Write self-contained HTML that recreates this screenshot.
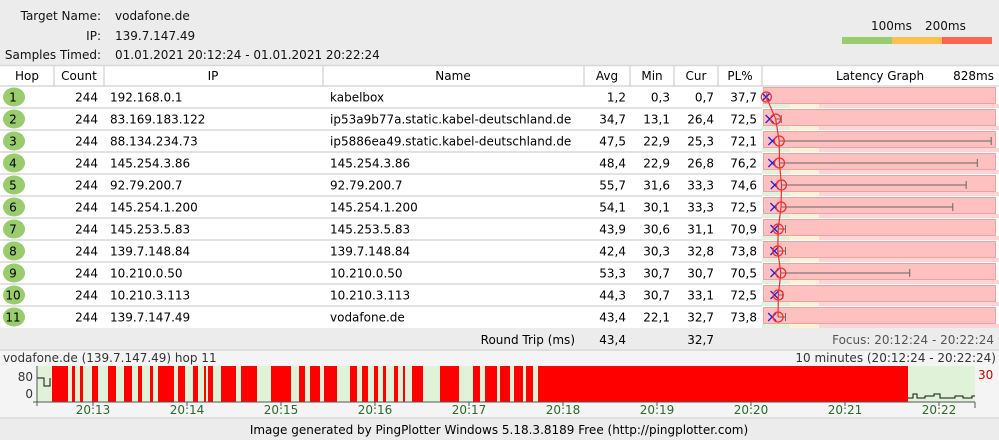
<!DOCTYPE html>
<html><head><meta charset="utf-8"><style>
*{margin:0;padding:0;box-sizing:border-box}
body{width:999px;height:440px;background:#ececec;font-family:"DejaVu Sans","Liberation Sans",sans-serif;font-size:12px;color:#111;position:relative;overflow:hidden}
.a{position:absolute;white-space:nowrap}
.r{text-align:right}
</style></head><body>
<div class="a r" style="left:0;width:101px;top:9px">Target Name:</div>
<div class="a" style="left:115px;top:9px">vodafone.de</div>
<div class="a r" style="left:0;width:101px;top:29px">IP:</div>
<div class="a" style="left:115px;top:29px">139.7.147.49</div>
<div class="a r" style="left:0;width:101px;top:48px">Samples Timed:</div>
<div class="a" style="left:115px;top:48px">01.01.2021 20:12:24 - 01.01.2021 20:22:24</div>
<div class="a" style="left:871px;top:19px">100ms</div>
<div class="a" style="left:925px;top:19px">200ms</div>
<div class="a" style="left:842px;top:37px;width:50px;height:7px;background:#98cc6c"></div>
<div class="a" style="left:892px;top:37px;width:50px;height:7px;background:#ffc04c"></div>
<div class="a" style="left:942px;top:37px;width:50px;height:7px;background:#ff6450"></div>
<div id="rows"></div>
<script>
var data=[
["1","192.168.0.1","kabelbox","1,2","0,3","0,7","37,7",1.2,0.3,3],
["2","83.169.183.122","ip53a9b77a.static.kabel-deutschland.de","34,7","13,1","26,4","72,5",34.7,13.1,55],
["3","88.134.234.73","ip5886ea49.static.kabel-deutschland.de","47,5","22,9","25,3","72,1",47.5,22.9,810],
["4","145.254.3.86","145.254.3.86","48,4","22,9","26,8","76,2",48.4,22.9,760],
["5","92.79.200.7","92.79.200.7","55,7","31,6","33,3","74,6",55.7,31.6,720],
["6","145.254.1.200","145.254.1.200","54,1","30,1","33,3","72,5",54.1,30.1,672],
["7","145.253.5.83","145.253.5.83","43,9","30,6","31,1","70,9",43.9,30.6,70],
["8","139.7.148.84","139.7.148.84","42,4","30,3","32,8","73,8",42.4,30.3,70],
["9","10.210.0.50","10.210.0.50","53,3","30,7","30,7","70,5",53.3,30.7,517],
["10","10.210.3.113","10.210.3.113","44,3","30,7","33,1","72,5",44.3,30.7,60],
["11","139.7.147.49","vodafone.de","43,4","22,1","32,7","73,8",43.4,22.1,70]];
var s='<svg class="a" style="left:0;top:0" width="999" height="440" xmlns="http://www.w3.org/2000/svg" font-family="DejaVu Sans, Liberation Sans, sans-serif" font-size="12">';
s+='<rect x="0" y="65" width="999" height="263" fill="#fff"/><g stroke="#d8d8d8" stroke-width="1.5"><line x1="0" y1="65.5" x2="999" y2="65.5"/><line x1="0" y1="86" x2="999" y2="86"/>';
for(var k=1;k<11;k++)s+='<line x1="0" y1="'+(86+k*22)+'" x2="762" y2="'+(86+k*22)+'"/>';
[54,104,323,584,630,674,718,762].forEach(function(x){s+='<line x1="'+x+'" y1="66" x2="'+x+'" y2="86"/>';});
s+='</g><g text-anchor="middle"><text x="27" y="80">Hop</text><text x="79" y="80">Count</text><text x="213" y="80">IP</text><text x="453" y="80">Name</text><text x="607" y="80">Avg</text><text x="652" y="80">Min</text><text x="696" y="80">Cur</text><text x="740" y="80">PL%</text></g><text x="836" y="80">Latency Graph</text><text x="994" y="80" text-anchor="end">828ms</text>';
function X(v){return 766+v*0.278;}
var pts=[];
for(var i=0;i<11;i++){var d=data[i],t=86+i*22,cy=t+11,ty=cy+4.5;
s+='<rect x="762" y="'+(t+18)+'" width="28" height="4" fill="#e2f2da"/><rect x="790" y="'+(t+18)+'" width="29" height="4" fill="#fff2d6"/><rect x="819" y="'+(t+18)+'" width="180" height="4" fill="#ffd4d4"/>';
s+='<rect x="763.5" y="'+(t+1.5)+'" width="232" height="16" fill="#ffc0c0" stroke="#e8a4a4"/>';
s+='<ellipse cx="14" cy="'+cy+'" rx="11" ry="9.5" fill="#98cc6c"/><text x="13" y="'+ty+'" text-anchor="middle">'+d[0]+'</text>';
s+='<text x="98" y="'+ty+'" text-anchor="end">244</text><text x="110" y="'+ty+'">'+d[1]+'</text><text x="330" y="'+ty+'">'+d[2]+'</text>';
s+='<g text-anchor="end"><text x="626" y="'+ty+'">'+d[3]+'</text><text x="670" y="'+ty+'">'+d[4]+'</text><text x="714" y="'+ty+'">'+d[5]+'</text><text x="757" y="'+ty+'">'+d[6]+'</text></g>';
var ax=X(d[7]),mn=X(d[8]),mx=X(d[9]);pts.push(ax+','+cy);
s+='<line x1="'+ax+'" y1="'+cy+'" x2="'+mx+'" y2="'+cy+'" stroke="#666"/><line x1="'+mx+'" y1="'+(cy-4)+'" x2="'+mx+'" y2="'+(cy+4)+'" stroke="#666"/>';
s+='<path d="M'+(mn-4)+' '+(cy-4)+'L'+(mn+4)+' '+(cy+4)+'M'+(mn-4)+' '+(cy+4)+'L'+(mn+4)+' '+(cy-4)+'" stroke="#2020e0" stroke-width="1.3"/>';
s+='<circle cx="'+ax+'" cy="'+cy+'" r="5" fill="none" stroke="#f03030" stroke-width="1.3"/>';}
s+='<polyline points="'+pts.join(' ')+'" fill="none" stroke="#f03030" stroke-width="1.2"/>';
s+='<line x1="0" y1="350" x2="999" y2="350" stroke="#d0d0d0"/><text x="575" y="344" text-anchor="end">Round Trip (ms)</text><text x="626" y="344" text-anchor="end">43,4</text><text x="714" y="344" text-anchor="end">32,7</text><text x="994" y="344" text-anchor="end" fill="#555">Focus: 20:12:24 - 20:22:24</text>';
s+='<rect x="0" y="351" width="999" height="67" fill="#f4f4f4"/><line x1="0" y1="418" x2="999" y2="418" stroke="#d0d0d0"/>';
s+='<text x="3" y="362" fill="#333">vodafone.de (139.7.147.49) hop 11</text><text x="996" y="362" text-anchor="end" fill="#333">10 minutes (20:12:24 - 20:22:24)</text>';
s+='<rect x="37" y="366" width="938" height="36" fill="#e0f2d8"/>';
var red=[[52,68],[72,75],[80,83],[92,98],[108,116],[124,132],[138,142],[150,153],[158,174],[178,185],[193,198],[204,206],[208,213],[221,236],[241,257],[271,291],[299,305],[310,320],[324,337],[350,357],[362,368],[374,378],[383,386],[394,398],[403,405],[412,423],[440,459],[473,480],[485,497],[500,510],[514,523],[526,533],[538,908]];
red.forEach(function(r){s+='<rect x="'+r[0]+'" y="366" width="'+(r[1]-r[0])+'" height="36" fill="#ff0000"/>';});
s+='<path d="M37 378H44V386H50V378M908 398H913V394H917V398H925V396H934V394H940V398H955V396H963V398H972V396H975" fill="none" stroke="#111"/>';
s+='<line x1="37" y1="366" x2="37" y2="406" stroke="#555"/><line x1="33" y1="402" x2="975" y2="402" stroke="#555"/><line x1="975" y1="402" x2="975" y2="408" stroke="#555"/>';
s+='<text x="33" y="381" text-anchor="end" fill="#333">80</text><text x="33" y="398" text-anchor="end" fill="#333">0</text><text x="978" y="379" fill="#c00">30</text>';
for(var m=0;m<10;m++){var x=93+m*94;s+='<line x1="'+x+'" y1="402" x2="'+x+'" y2="406" stroke="#555"/><text x="'+x+'" y="414" text-anchor="middle" fill="#2a6a2a">20:'+(13+m)+'</text>';}
s+='<text x="499" y="434" text-anchor="middle">Image generated by PingPlotter Windows 5.18.3.8189 Free (http://pingplotter.com)</text></svg>';
document.getElementById('rows').innerHTML=s;
</script>
</body></html>
